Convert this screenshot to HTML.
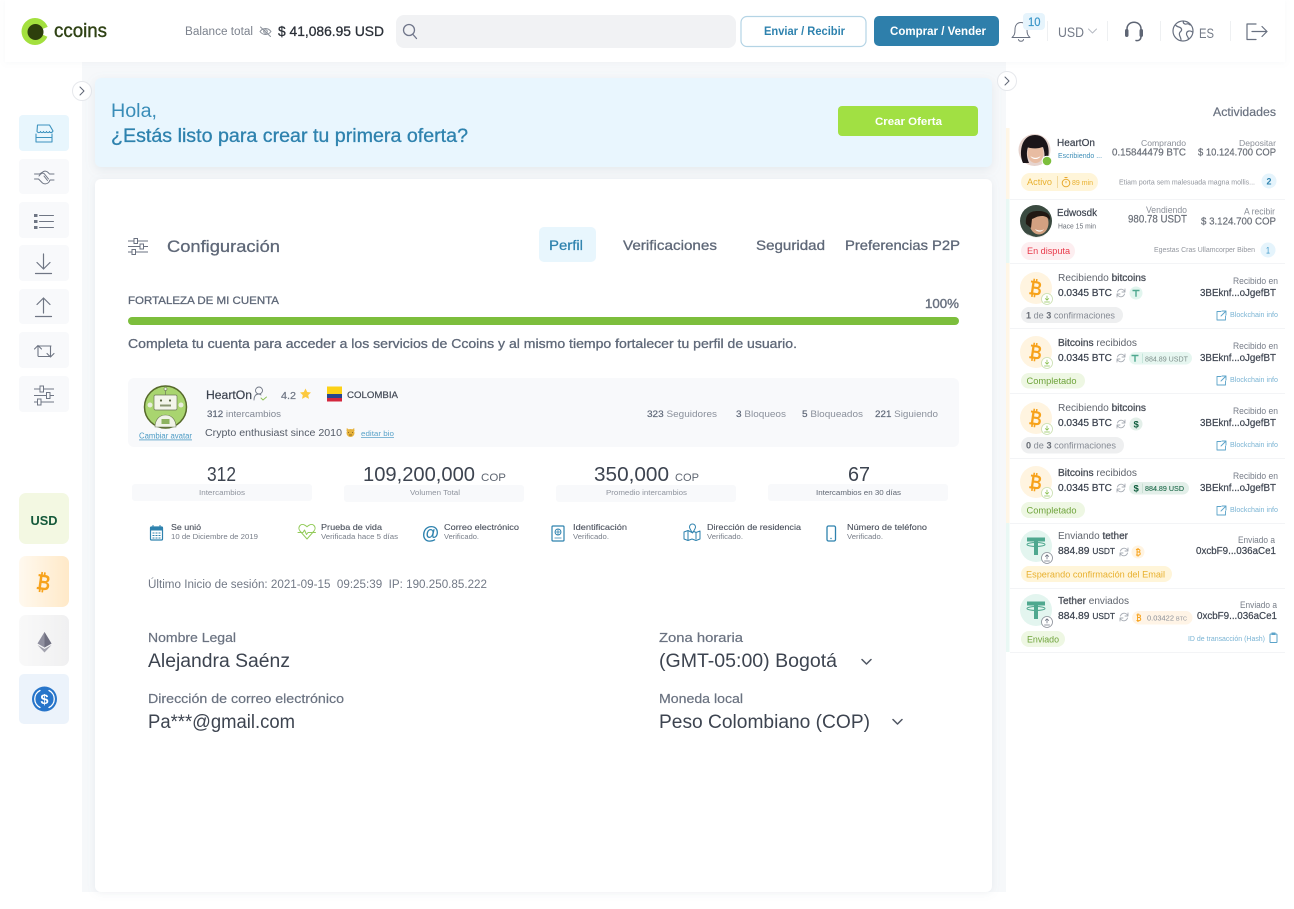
<!DOCTYPE html>
<html lang="es"><head><meta charset="utf-8"><title>Ccoins</title>
<style>
html,body{margin:0;padding:0;background:#fff;width:1294px;height:909px;overflow:hidden}
svg{display:block;position:absolute;left:0;top:0}
text{font-family:"Liberation Sans",sans-serif;white-space:pre}
.b{font-weight:700}
.st{fill:none;stroke-linecap:round;stroke-linejoin:round}
</style></head><body>
<svg width="1294" height="909" viewBox="0 0 1294 909" xmlns="http://www.w3.org/2000/svg">
<defs>
<filter id="s1" x="-5%" y="-20%" width="110%" height="150%"><feDropShadow dx="0" dy="3" stdDeviation="5" flood-color="#8a99a8" flood-opacity=".16"/></filter>
<filter id="s2" x="-5%" y="-5%" width="110%" height="110%"><feDropShadow dx="0" dy="1" stdDeviation="4" flood-color="#8a99a8" flood-opacity=".14"/></filter>
<filter id="s3" x="-2%" y="-20%" width="104%" height="150%"><feDropShadow dx="0" dy="1" stdDeviation="3" flood-color="#8a99a8" flood-opacity=".07"/></filter>
<linearGradient id="gb" x1="0" x2="1"><stop offset="0" stop-color="#fff9ef"/><stop offset="1" stop-color="#ffe9c8"/></linearGradient>
<linearGradient id="ge" x1="0" x2="1"><stop offset="0" stop-color="#f9f9f9"/><stop offset="1" stop-color="#f0f0f1"/></linearGradient>
<path id="rf" class="st" stroke="#a6abb3" stroke-width=".9" d="M-3.500-1a3.800 3.800 0 0 1 6.500-1.500l1 1M3.500 1a3.800 3.800 0 0 1-6.500 1.500l-1-1M4-4v3h-3M-4 4v-3h3"/>
<path id="ex" class="st" stroke="#5ba3c9" stroke-width=".9" d="M4-.5H0v8.500h8.500v-4M5-1h4v4M9-1L4 4"/>
<g id="dl"><circle r="5.500" fill="#fff" stroke="#c9dfae" stroke-width=".8"/><path class="st" stroke="#8cc152" stroke-width=".8" d="M0-3v4M-1.700-.5L0 1.200 1.700-.5M-2.500 3h5"/></g>
<g id="ul"><circle r="5.500" fill="#fff" stroke="#8a8f98" stroke-width=".8"/><path class="st" stroke="#6f7684" stroke-width=".8" d="M0 1v-4M-1.700-1.500L0-3.200 1.700-1.500M-2.500 3h5"/></g>
<g id="te"><circle r="16" fill="#e3f5ef"/><rect x="-9" y="-8.500" width="18" height="4" fill="#4fa88f"/><rect x="-2" y="-8" width="4" height="17" fill="#4fa88f"/><ellipse cy="-1.500" rx="9" ry="2" fill="none" stroke="#4fa88f"/></g>
</defs>

<!-- main background -->
<rect x="82" y="60" width="924" height="832" fill="#f6f8fa"/>
<rect x="1006" y="60" width="279" height="832" fill="#fff"/>

<!-- header -->
<rect x="5" y="0" width="1280" height="62" fill="#fff" filter="url(#s3)"/>
<circle cx="35" cy="31.500" r="13.500" fill="#a3e03e"/>
<path d="M36 31.500L50 26V38Z" fill="#fff"/>
<circle cx="35.500" cy="32" r="8" fill="#2d3f0c"/>
<text x="54" y="37" font-size="19" textLength="53" lengthAdjust="spacingAndGlyphs" fill="#2f4214" stroke="#2f4214" stroke-width=".4">ccoins</text>
<text x="185" y="35" font-size="11.500" textLength="68" lengthAdjust="spacingAndGlyphs" fill="#7c828d">Balance total</text>
<g class="st" stroke="#8a909a" stroke-width="1"><path d="M260 31.500c3-4 8-4 11 0c-3 4-8 4-11 0z"/><circle cx="265.500" cy="31.500" r="1.800"/><path d="M260.500 27l10 9.500"/></g>
<text x="278" y="36" font-size="14" textLength="106" lengthAdjust="spacingAndGlyphs" fill="#2b3038" stroke="#2b3038" stroke-width=".3">$ 41,086.95 USD</text>
<rect x="396" y="15" width="340" height="33" rx="8" fill="#f1f2f4"/>
<g class="st" stroke="#70768a" stroke-width="1.300"><circle cx="409" cy="30" r="5.500"/><path d="M413 34.500l3.500 4"/></g>
<rect x="741" y="16.500" width="125" height="30" rx="6" fill="#fff" stroke="#b4d4e5" stroke-width="1.200"/>
<text x="764" y="35" font-size="11.500" class="b" textLength="81" lengthAdjust="spacingAndGlyphs" fill="#2e82ae">Enviar / Recibir</text>
<rect x="874" y="16" width="125" height="30" rx="5" fill="#2e7fab"/>
<text x="890" y="35" font-size="11.500" class="b" textLength="96" lengthAdjust="spacingAndGlyphs" fill="#fff">Comprar / Vender</text>
<g class="st" stroke="#6a7180" stroke-width="1"><path d="M1012 37.500c2.500-2 3-4 3-8c0-4 2-7 6-7c4 0 6 3 6 7c0 4 .5 6 3 8z"/><path d="M1018.500 39.500c.5 2.300 4.500 2.300 5 0"/></g>
<rect x="1023" y="13" width="22" height="17" rx="4" fill="#e6f4fc"/>
<text x="1028" y="26" font-size="11.500" textLength="12.500" lengthAdjust="spacingAndGlyphs" fill="#3a96c8" stroke="#3a96c8" stroke-width=".2">10</text>
<g stroke="#eef0f2"><path d="M1047.500 21v20M1107.500 21v20M1160.500 21v20M1230.500 21v20"/></g>
<text x="1058" y="37" font-size="14" textLength="26" lengthAdjust="spacingAndGlyphs" fill="#747b88">USD</text>
<path class="st" stroke="#b5bac2" stroke-width="1" d="M1088.500 29l4 4 4-4"/>
<g class="st" stroke="#5e6574" stroke-width="1.500"><path d="M1127 34v-5c0-9 14-9 14 0v5"/><path d="M1136 40.500c3 .5 5-1 5-4"/></g>
<rect x="1125" y="29" width="3.500" height="8" rx="1.700" fill="#5e6574"/><rect x="1139.500" y="29" width="3.500" height="8" rx="1.700" fill="#5e6574"/>
<g class="st" stroke="#687080" stroke-width="1.200"><circle cx="1183" cy="31" r="10"/><path d="M1175.500 25c2 3 5 1 6 4c1 3-3 2-2 6c.5 2 1.500 3 1.500 5"/><path d="M1183.500 21.500c-1 2 2 3 3 2.500c2-1 3 1 4 1M1192.500 32c-3-2-6-1-6 2c0 2 1.500 2 2 5"/></g>
<text x="1199" y="38" font-size="14" textLength="15" lengthAdjust="spacingAndGlyphs" fill="#747b88">ES</text>
<g class="st" stroke="#687080" stroke-width="1.200"><path d="M1256 24h-9v15.500h9"/><path d="M1252 31.500h15M1262 26.500l5 5-5 5"/></g>

<!-- chevrons -->
<circle cx="82" cy="91" r="9.500" fill="#fff" stroke="#e6e8ec"/>
<path class="st" stroke="#5e6574" stroke-width="1" d="M80 87l4 4-4 4"/>
<circle cx="1007" cy="81" r="9.500" fill="#fff" stroke="#e6e8ec"/>
<path class="st" stroke="#5e6574" stroke-width="1" d="M1005 77l4 4-4 4"/>

<!-- sidebar -->
<rect x="19" y="115" width="50" height="36" rx="4" fill="#e8f6fd"/>
<g fill="#f8f9fb"><rect x="19" y="159" width="50" height="35" rx="4"/><rect x="19" y="202" width="50" height="36" rx="4"/><rect x="19" y="245" width="50" height="36" rx="4"/><rect x="19" y="289" width="50" height="35" rx="4"/><rect x="19" y="332" width="50" height="36" rx="4"/><rect x="19" y="376" width="50" height="36" rx="4"/></g>
<g class="st" stroke="#3d93bf" stroke-width="1.100"><path d="M38 125h12l3.500 6c-1 2-3 2-3.500.5c-.5 1.500-2.500 1.500-3 0c-.5 1.500-2.500 1.500-3 0c-.5 1.500-2.500 1.500-3 0c-.5 1.500-2.500 1.500-3.500 0z" transform="translate(-.5 0)"/><path d="M36 134v8h16v-8M36 137.500h16"/></g>
<g class="st" stroke="#6f7684" stroke-width="1"><path d="M34.500 174h5l4-2.500c2-1 4 0 6 2.500h4.500M34.500 179h4l4 4c2 1.500 5 1 6.500-1l1-2h4M39 176c2-3 4-3.500 5.500-2l4 5M44 176l3.500 4.500"/></g>
<g fill="#6f7684"><rect x="34" y="214" width="3.500" height="3"/><rect x="34" y="220" width="3.500" height="3"/><rect x="34" y="226" width="3.500" height="3"/></g>
<g class="st" stroke="#6f7684" stroke-width="1"><path d="M39.500 215.500h14M39.500 221.500h14M39.500 227.500h14"/></g>
<g class="st" stroke="#6f7684" stroke-width="1.200"><path d="M43.500 254v15M37 262.500l6.500 6.500 6.500-6.500M35.500 273.500h16"/><path d="M43.500 298v15M37 304.500l6.500-6.500 6.500 6.500M35.500 316.500h16"/></g>
<g class="st" stroke="#6f7684" stroke-width="1.100"><path d="M38 356v-10h13M34.500 349l3.500-3.500 3.500 3.500M50.500 346v10.500h-12M47 353.500l3.500 3.500 3.500-3.500"/></g>
<g stroke="#6f7684" stroke-width="1" fill="#f8f9fb"><path d="M34 389h20M34 395.500h20M34 402h20"/><rect x="40" y="386" width="3.500" height="6"/><rect x="46.500" y="392.500" width="3.500" height="6"/><rect x="37.500" y="399" width="3.500" height="6"/></g>

<rect x="19" y="493" width="50" height="51" rx="7" fill="#f3f8e2"/>
<text x="30.500" y="525" font-size="12.500" class="b" textLength="27" lengthAdjust="spacingAndGlyphs" fill="#14593a">USD</text>
<rect x="19" y="556" width="50" height="51" rx="7" fill="url(#gb)"/>
<text x="36.500" y="590" font-size="22" class="b" fill="#f7a21b" transform="rotate(8 44 582)" textLength="14" lengthAdjust="spacingAndGlyphs">₿</text>
<rect x="19" y="615" width="50" height="51" rx="7" fill="url(#ge)"/>
<path d="M44.500 632l-7 11.500 7 4 7-4z" fill="#8f8f9e"/><path d="M44.500 632v15.500l7-4z" fill="#6f6f80"/><path d="M37.500 645l7 4 7-4-7 7.500z" fill="#a3a3ae"/>
<rect x="19" y="674" width="50" height="50" rx="5" fill="#ecf3fb"/>
<circle cx="44.500" cy="699" r="12.500" fill="#2775ca"/>
<path class="st" stroke="#fff" stroke-width="1.300" d="M40 690.500a9.500 9.500 0 0 0 0 17M49 690.500a9.500 9.500 0 0 1 0 17"/>
<text x="40.500" y="704" font-size="14" class="b" textLength="8" lengthAdjust="spacingAndGlyphs" fill="#fff">$</text>

<!-- banner -->
<rect x="95" y="78" width="897" height="89" rx="6" fill="#e9f6fe" filter="url(#s1)"/>
<text x="111" y="117" font-size="19" textLength="46" lengthAdjust="spacingAndGlyphs" fill="#3a8db8">Hola,</text>
<text x="111" y="142" font-size="19" textLength="357" lengthAdjust="spacingAndGlyphs" fill="#2e82ae" stroke="#2e82ae" stroke-width=".3">¿Estás listo para crear tu primera oferta?</text>
<rect x="838" y="106" width="140" height="30" rx="4" fill="#a1e043"/>
<text x="875" y="125" font-size="11" class="b" textLength="67" lengthAdjust="spacingAndGlyphs" fill="#fff">Crear Oferta</text>

<!-- card -->
<rect x="95" y="179" width="897" height="713" rx="6" fill="#fff" filter="url(#s2)"/>
<g stroke="#6a7180" stroke-width="1" fill="#fff"><path d="M128 241h20M128 246.500h20M128 252h20"/><rect x="134" y="238.500" width="3.500" height="5"/><rect x="140" y="244" width="3.500" height="5"/><rect x="132" y="249.500" width="3.500" height="5"/></g>
<text x="167" y="252" font-size="17" textLength="113" lengthAdjust="spacingAndGlyphs" fill="#5f6878" stroke="#5f6878" stroke-width=".3">Configuración</text>
<rect x="539" y="227" width="57" height="35" rx="5" fill="#e8f6fd"/>
<text x="549" y="250" font-size="14" textLength="34" lengthAdjust="spacingAndGlyphs" fill="#2e82ae" stroke="#2e82ae" stroke-width=".25">Perfil</text>
<g font-size="14" fill="#5f6878" stroke="#5f6878" stroke-width=".3">
<text x="623" y="250" textLength="94" lengthAdjust="spacingAndGlyphs">Verificaciones</text>
<text x="756" y="250" textLength="69" lengthAdjust="spacingAndGlyphs">Seguridad</text>
<text x="845" y="250" textLength="115" lengthAdjust="spacingAndGlyphs">Preferencias P2P</text>
</g>
<text x="128" y="304" font-size="11" textLength="151" lengthAdjust="spacingAndGlyphs" fill="#5f6878" stroke="#5f6878" stroke-width=".3">FORTALEZA DE MI CUENTA</text>
<text x="925" y="308" font-size="13" textLength="34" lengthAdjust="spacingAndGlyphs" fill="#6a7280" stroke="#6a7280" stroke-width=".4">100%</text>
<rect x="128" y="317" width="831" height="8" rx="4" fill="#7cbe3c"/>
<text x="128" y="348" font-size="13" textLength="669" lengthAdjust="spacingAndGlyphs" fill="#5f6878" stroke="#5f6878" stroke-width=".3">Completa tu cuenta para acceder a los servicios de Ccoins y al mismo tiempo fortalecer tu perfil de usuario.</text>

<!-- profile box -->
<rect x="128" y="378" width="831" height="69" rx="6" fill="#f8f9fb"/>
<circle cx="165.500" cy="407" r="21" fill="#a9d56f" stroke="#56692a" stroke-width="1.500"/>
<rect x="154" y="395" width="23" height="15" rx="1.500" fill="#f3f5ea" stroke="#6d7a58" stroke-width=".7"/>
<path d="M165.500 395v-5" stroke="#6d7a58" stroke-width=".7"/><circle cx="165.500" cy="389" r="1.500" fill="#eef2e2" stroke="#6d7a58" stroke-width=".6"/>
<circle cx="161" cy="400.500" r="1.100" fill="#55633d"/><circle cx="170" cy="400.500" r="1.100" fill="#55633d"/><rect x="160" y="404.500" width="11" height="2" fill="#8a9670"/>
<circle cx="150" cy="405" r="2.500" fill="#e8eddc"/><circle cx="181" cy="405" r="2.500" fill="#e8eddc"/>
<path d="M155 427c0-8 5-12 10.500-12s10.500 4 10.500 12z" fill="#f0f3e6" stroke="#6d7a58" stroke-width=".6"/><rect x="161.500" y="419" width="8" height="5" fill="#8db35f"/>
<text x="139" y="438.500" font-size="8" textLength="53" lengthAdjust="spacingAndGlyphs" fill="#4b9ac4" text-decoration="underline">Cambiar avatar</text>
<text x="206" y="399" font-size="11.500" textLength="46" lengthAdjust="spacingAndGlyphs" fill="#3d4450" stroke="#3d4450" stroke-width=".2">HeartOn</text>
<g class="st" stroke="#6f7684" stroke-width=".9"><circle cx="259" cy="390.500" r="3.500"/><path d="M254 400c0-4 2-6 4.500-6c1 0 2 .3 2.500 1"/></g><path class="st" stroke="#8cc152" stroke-width=".9" d="M261 398l2 2 3.500-3"/>
<text x="281" y="399" font-size="10.500" textLength="15" lengthAdjust="spacingAndGlyphs" fill="#727987" stroke="#727987" stroke-width=".25">4.2</text>
<path d="M305.500 388.500l1.700 3.500 3.800.5-2.800 2.600.8 3.800-3.500-1.900-3.500 1.900.8-3.800-2.800-2.600 3.800-.5z" fill="#fcc93f"/>
<rect x="327" y="386.500" width="15" height="7.500" fill="#fcd116"/><rect x="327" y="394" width="15" height="4" fill="#27468f"/><rect x="327" y="398" width="15" height="3.500" fill="#d3273d"/>
<text x="347" y="398" font-size="9.500" textLength="51" lengthAdjust="spacingAndGlyphs" fill="#444b57" stroke="#444b57" stroke-width=".2">COLOMBIA</text>
<text x="207" y="417" font-size="9.500" textLength="74" lengthAdjust="spacingAndGlyphs" fill="#828894"><tspan fill="#5f6878" stroke="#5f6878" stroke-width=".2">312</tspan> intercambios</text>
<text x="205" y="436" font-size="10" textLength="137" lengthAdjust="spacingAndGlyphs" fill="#555c68">Crypto enthusiast since 2010</text>
<circle cx="350.500" cy="433" r="4" fill="#e6b33e"/><path d="M346.500 431l.3-3 2 1.500h3.400l2-1.500.3 3z" fill="#e6b33e"/><path d="M348 432.500h1M352 432.500h1M349 435h3" stroke="#7a5518" stroke-width=".7"/>
<text x="361" y="436" font-size="7.500" textLength="33" lengthAdjust="spacingAndGlyphs" fill="#5ba3c9" text-decoration="underline">editar bio</text>
<g font-size="9.500" fill="#8a909b">
<text x="647" y="417" textLength="70" lengthAdjust="spacingAndGlyphs"><tspan fill="#5f6878" stroke="#5f6878" stroke-width=".2">323</tspan> Seguidores</text>
<text x="736" y="417" textLength="50" lengthAdjust="spacingAndGlyphs"><tspan fill="#5f6878" stroke="#5f6878" stroke-width=".2">3</tspan> Bloqueos</text>
<text x="802" y="417" textLength="61" lengthAdjust="spacingAndGlyphs"><tspan fill="#5f6878" stroke="#5f6878" stroke-width=".2">5</tspan> Bloqueados</text>
<text x="875" y="417" textLength="63" lengthAdjust="spacingAndGlyphs"><tspan fill="#5f6878" stroke="#5f6878" stroke-width=".2">221</tspan> Siguiendo</text>
</g>

<!-- stats -->
<g fill="#f8f9fb"><rect x="132" y="484" width="180" height="17" rx="3"/><rect x="344" y="485" width="180" height="17" rx="3"/><rect x="556" y="485" width="180" height="17" rx="3"/><rect x="768" y="484" width="180" height="17" rx="3"/></g>
<g font-size="20" fill="#3d4450">
<text x="207" y="481" textLength="29" lengthAdjust="spacingAndGlyphs">312</text>
<text x="363" y="481" textLength="112" lengthAdjust="spacingAndGlyphs">109,200,000</text>
<text x="594" y="481" textLength="75" lengthAdjust="spacingAndGlyphs">350,000</text>
<text x="848" y="481" textLength="22" lengthAdjust="spacingAndGlyphs">67</text>
</g>
<g font-size="11" fill="#5f6672"><text x="481" y="481" textLength="25" lengthAdjust="spacingAndGlyphs">COP</text><text x="675" y="481" textLength="24" lengthAdjust="spacingAndGlyphs">COP</text></g>
<g font-size="7.500" fill="#8f949e">
<text x="199" y="495" textLength="46" lengthAdjust="spacingAndGlyphs">Intercambios</text>
<text x="410" y="495" textLength="50" lengthAdjust="spacingAndGlyphs">Volumen Total</text>
<text x="606" y="495" textLength="81" lengthAdjust="spacingAndGlyphs">Promedio intercambios</text>
<text x="816" y="495" textLength="85" lengthAdjust="spacingAndGlyphs" fill="#5f6672">Intercambios en 30 días</text>
</g>

<!-- verification row -->
<g font-size="8" fill="#4a505c" stroke="#4a505c" stroke-width=".1">
<text x="171" y="530" textLength="30" lengthAdjust="spacingAndGlyphs">Se unió</text>
<text x="321" y="530" textLength="61" lengthAdjust="spacingAndGlyphs">Prueba de vida</text>
<text x="444" y="530" textLength="75" lengthAdjust="spacingAndGlyphs">Correo electrónico</text>
<text x="573" y="530" textLength="54" lengthAdjust="spacingAndGlyphs">Identificación</text>
<text x="707" y="530" textLength="94" lengthAdjust="spacingAndGlyphs">Dirección de residencia</text>
<text x="847" y="530" textLength="80" lengthAdjust="spacingAndGlyphs">Número de teléfono</text>
</g>
<g font-size="7.500" fill="#777d88">
<text x="171" y="539" textLength="87" lengthAdjust="spacingAndGlyphs">10 de Diciembre de 2019</text>
<text x="321" y="539" textLength="77" lengthAdjust="spacingAndGlyphs">Verificada hace 5 días</text>
<text x="444" y="539" textLength="35" lengthAdjust="spacingAndGlyphs">Verificado.</text>
<text x="573" y="539" textLength="36" lengthAdjust="spacingAndGlyphs">Verificado.</text>
<text x="707" y="539" textLength="36" lengthAdjust="spacingAndGlyphs">Verificado.</text>
<text x="847" y="539" textLength="36" lengthAdjust="spacingAndGlyphs">Verificado.</text>
</g>
<rect x="150.500" y="527" width="12" height="13" rx="1" fill="none" stroke="#2e82ae" stroke-width="1.200"/><rect x="150" y="527" width="13" height="3.500" fill="#2e82ae"/>
<path d="M153 525v3M160 525v3" stroke="#2e82ae"/>
<path d="M152.500 533h8M152.500 535.500h8M152.500 538h8" stroke="#2e82ae" stroke-dasharray="2 1"/>
<path class="st" stroke="#93cb5a" stroke-width="1" d="M300 531c-3-4 1-8 4.500-6c1.500.8 2.500 1.800 2.500 1.800s1-1 2.500-1.800c3.500-2 7.500 2 4.500 6l-7 8zM298 532.500h5l1.500-2.500 2 4.500 1.500-2h7.500"/>
<text x="422" y="539" font-size="18" class="b" textLength="17" lengthAdjust="spacingAndGlyphs" fill="#2e82ae">@</text>
<rect x="552" y="526" width="12" height="15" rx="1" fill="none" stroke="#2e82ae" stroke-width="1.200"/><circle cx="558" cy="532" r="3" fill="none" stroke="#2e82ae" stroke-width=".9"/><path d="M555 532h6M558 529v6M554.500 538h7" stroke="#2e82ae" stroke-width=".8"/>
<g class="st" stroke="#2e82ae" stroke-width="1"><path d="M684 532l4-1.500 4 2 2-1 2 1 4-1.500v8l-4 1.500-4-1.500-4 1.500-4-1.500z"/><path d="M692.500 533c-2-3-3-4.500-3-6a3 3 0 0 1 6 0c0 1.500-1 3-3 6z"/><path d="M688 531v9M696 533v6"/></g>
<rect x="827" y="526" width="8.500" height="15" rx="1.500" fill="none" stroke="#2e82ae" stroke-width="1.300"/><circle cx="831" cy="538.500" r=".7" fill="#2e82ae"/>

<text x="148" y="588" font-size="11.500" textLength="339" lengthAdjust="spacingAndGlyphs" fill="#727986">Último Inicio de sesión: 2021-09-15  09:25:39  IP: 190.250.85.222</text>

<!-- fields -->
<g font-size="13" fill="#6a7280" stroke="#6a7280" stroke-width=".2">
<text x="148" y="642" textLength="88" lengthAdjust="spacingAndGlyphs">Nombre Legal</text>
<text x="148" y="703" textLength="196" lengthAdjust="spacingAndGlyphs">Dirección de correo electrónico</text>
<text x="659" y="642" textLength="84" lengthAdjust="spacingAndGlyphs">Zona horaria</text>
<text x="659" y="703" textLength="84" lengthAdjust="spacingAndGlyphs">Moneda local</text>
</g>
<g font-size="19" fill="#3d4450">
<text x="148" y="667" textLength="142" lengthAdjust="spacingAndGlyphs">Alejandra Saénz</text>
<text x="148" y="728" textLength="147" lengthAdjust="spacingAndGlyphs">Pa***@gmail.com</text>
<text x="659" y="667" textLength="178" lengthAdjust="spacingAndGlyphs">(GMT-05:00) Bogotá</text>
<text x="659" y="728" textLength="211" lengthAdjust="spacingAndGlyphs">Peso Colombiano (COP)</text>
</g>
<g class="st" stroke="#4f5663" stroke-width="1.500"><path d="M862 659.500l4.500 4.500 4.500-4.500M893 719.500l4.500 4.500 4.500-4.500"/></g>

<!-- right panel -->
<text x="1213" y="116" font-size="11.500" textLength="63" lengthAdjust="spacingAndGlyphs" fill="#6a7280" stroke="#6a7280" stroke-width=".2">Actividades</text>
<rect x="1006" y="128" width="3.500" height="71" fill="#fff6e6"/>
<rect x="1006" y="199" width="3.500" height="64" fill="#e9f8f4"/>
<rect x="1006" y="263" width="3.500" height="260" fill="#fff6e6"/>
<rect x="1006" y="523" width="3.500" height="129" fill="#e9f8f4"/>
<g stroke="#f3f4f6"><path d="M1010 199.500h275M1010 263.500h275M1010 328.500h275M1010 393.500h275M1010 458.500h275M1010 523.500h275M1010 588.500h275M1010 652.500h275"/></g>

<!-- row 1 -->
<circle cx="1034.500" cy="150" r="16" fill="#e6d3cd"/>
<path d="M1023 163c-4-8-3-28 12-28s16 20 11 28l-3 0c2-5 2-10 0-16c-4 2-11 2-15 0c-2 6-1 11 1 16z" fill="#1b1519"/>
<ellipse cx="1035.500" cy="153" rx="8" ry="10" fill="#e8bca2"/>
<path d="M1027 147c4 2 13 2 17-1l-1-6h-14z" fill="#1b1519"/>
<path d="M1030.500 156c3 2.500 7 2.500 10 0c-1.500 4-8.500 4-10 0z" fill="#fff"/>
<circle cx="1047" cy="161" r="4.800" fill="#7cbe3c" stroke="#fff"/>
<text x="1057" y="146" font-size="10" textLength="38" lengthAdjust="spacingAndGlyphs" fill="#3d4450" stroke="#3d4450" stroke-width=".2">HeartOn</text>
<text x="1058" y="158" font-size="7" textLength="44" lengthAdjust="spacingAndGlyphs" fill="#3f8fb8">Escribiendo ...</text>
<text x="1141" y="146" font-size="8.500" textLength="45" lengthAdjust="spacingAndGlyphs" fill="#8a8f98">Comprando</text>
<text x="1112" y="155.500" font-size="10" textLength="74" lengthAdjust="spacingAndGlyphs" fill="#6a6f78" stroke="#6a6f78" stroke-width=".2">0.15844479 BTC</text>
<text x="1239" y="146" font-size="8.500" textLength="37" lengthAdjust="spacingAndGlyphs" fill="#8a8f98">Depositar</text>
<text x="1198" y="155.500" font-size="10" textLength="78" lengthAdjust="spacingAndGlyphs" fill="#6a6f78" stroke="#6a6f78" stroke-width=".2">$ 10.124.700 COP</text>
<rect x="1021" y="173" width="77" height="18" rx="9" fill="#fff5d9"/>
<text x="1027" y="185" font-size="9" textLength="25" lengthAdjust="spacingAndGlyphs" fill="#e8b02e">Activo</text>
<path d="M1057.500 176v12" stroke="#f0d28c" stroke-width=".8"/>
<circle cx="1066" cy="183" r="3.800" fill="none" stroke="#e8a92e" stroke-width="1"/><path d="M1064.500 177.500h3M1066 181v2.200" stroke="#e8a92e" stroke-width=".9"/>
<text x="1072" y="185" font-size="7.500" textLength="21" lengthAdjust="spacingAndGlyphs" fill="#e8b02e">89 min</text>
<text x="1119" y="184.500" font-size="7" textLength="136" lengthAdjust="spacingAndGlyphs" fill="#92969e">Etiam porta sem malesuada magna mollis...</text>
<circle cx="1269" cy="181" r="7.500" fill="#e5f4fc"/>
<text x="1266.500" y="184.500" font-size="9.500" class="b" textLength="5" lengthAdjust="spacingAndGlyphs" fill="#2e82ae">2</text>

<!-- row 2 -->
<circle cx="1036" cy="221" r="16" fill="#3a4a40"/>
<ellipse cx="1039" cy="223" rx="9.500" ry="11.500" fill="#d3a181"/>
<path d="M1026 224c-1-9 3-13 12-13s13 4 12 9c-3-3-5-4-8-4c-5 0-7 2-10 3l-1 9z" fill="#211812"/>
<path d="M1035 229c3 2 7 2 9 0c-2 3.500-7 3.500-9 0z" fill="#fff"/>
<path d="M1026 233c3 2 8 4 10 4c4 0 7-1 9-3l-1 2c-2 1-5 1.500-8 1.500c-4 0-7-2-10-4.500z" fill="#e8e4de"/>
<text x="1057" y="216" font-size="10" textLength="40" lengthAdjust="spacingAndGlyphs" fill="#3d4450" stroke="#3d4450" stroke-width=".2">Edwosdk</text>
<text x="1058" y="228.500" font-size="7" textLength="38" lengthAdjust="spacingAndGlyphs" fill="#6a6f78">Hace 15 min</text>
<text x="1146" y="213" font-size="9" textLength="41" lengthAdjust="spacingAndGlyphs" fill="#8a8f98">Vendiendo</text>
<text x="1128" y="222.500" font-size="11" textLength="59" lengthAdjust="spacingAndGlyphs" fill="#6a6f78" stroke="#6a6f78" stroke-width=".2">980.78 USDT</text>
<text x="1244" y="214.500" font-size="9" textLength="31" lengthAdjust="spacingAndGlyphs" fill="#8a8f98">A recibir</text>
<text x="1201" y="224.500" font-size="10" textLength="75" lengthAdjust="spacingAndGlyphs" fill="#6a6f78" stroke="#6a6f78" stroke-width=".2">$ 3.124.700 COP</text>
<rect x="1021" y="242" width="54" height="18" rx="9" fill="#fdeef0"/>
<text x="1027" y="254" font-size="9" textLength="43" lengthAdjust="spacingAndGlyphs" fill="#e8394a">En disputa</text>
<text x="1154" y="252" font-size="7" textLength="101" lengthAdjust="spacingAndGlyphs" fill="#92969e">Egestas Cras Ullamcorper Biben</text>
<circle cx="1268" cy="250" r="7.500" fill="#e5f4fc"/>
<text x="1266" y="253.500" font-size="9.500" textLength="4" lengthAdjust="spacingAndGlyphs" fill="#3a96c8">1</text>

<!-- BTC circles -->
<g fill="#fff4e0"><circle cx="1036" cy="288" r="16"/><circle cx="1036" cy="352" r="16"/><circle cx="1036" cy="418" r="16"/><circle cx="1036" cy="482" r="16"/></g>
<g font-size="20" class="b" fill="#f7a21b">
<text x="1029" y="295" transform="rotate(8 1036 288)" textLength="13" lengthAdjust="spacingAndGlyphs">₿</text>
<text x="1029" y="359" transform="rotate(8 1036 352)" textLength="13" lengthAdjust="spacingAndGlyphs">₿</text>
<text x="1029" y="425" transform="rotate(8 1036 418)" textLength="13" lengthAdjust="spacingAndGlyphs">₿</text>
<text x="1029" y="489" transform="rotate(8 1036 482)" textLength="13" lengthAdjust="spacingAndGlyphs">₿</text>
</g>
<use href="#dl" x="1047" y="299"/><use href="#dl" x="1047" y="363"/><use href="#dl" x="1047" y="429"/><use href="#dl" x="1047" y="493"/>

<!-- tether circles -->
<use href="#te" x="1036" y="546"/><use href="#te" x="1036" y="610"/>
<use href="#ul" x="1047" y="558"/><use href="#ul" x="1047" y="622"/>

<!-- titles -->
<g font-size="10" fill="#5f646d">
<text x="1058" y="281" textLength="88" lengthAdjust="spacingAndGlyphs">Recibiendo <tspan fill="#4a4f58" stroke="#4a4f58" stroke-width=".3">bitcoins</tspan></text>
<text x="1058" y="346" textLength="79" lengthAdjust="spacingAndGlyphs"><tspan fill="#4a4f58" stroke="#4a4f58" stroke-width=".3">Bitcoins</tspan> recibidos</text>
<text x="1058" y="411" textLength="88" lengthAdjust="spacingAndGlyphs">Recibiendo <tspan fill="#4a4f58" stroke="#4a4f58" stroke-width=".3">bitcoins</tspan></text>
<text x="1058" y="476" textLength="79" lengthAdjust="spacingAndGlyphs"><tspan fill="#4a4f58" stroke="#4a4f58" stroke-width=".3">Bitcoins</tspan> recibidos</text>
<text x="1058" y="539" textLength="70" lengthAdjust="spacingAndGlyphs">Enviando <tspan fill="#4a4f58" stroke="#4a4f58" stroke-width=".3">tether</tspan></text>
<text x="1058" y="604" textLength="71" lengthAdjust="spacingAndGlyphs"><tspan fill="#4a4f58" stroke="#4a4f58" stroke-width=".3">Tether</tspan> enviados</text>
</g>
<g font-size="10.500" fill="#3d4450" stroke="#3d4450" stroke-width=".25">
<text x="1058" y="296" textLength="54" lengthAdjust="spacingAndGlyphs">0.0345 BTC</text>
<text x="1058" y="361" textLength="54" lengthAdjust="spacingAndGlyphs">0.0345 BTC</text>
<text x="1058" y="426" textLength="54" lengthAdjust="spacingAndGlyphs">0.0345 BTC</text>
<text x="1058" y="491" textLength="54" lengthAdjust="spacingAndGlyphs">0.0345 BTC</text>
<text x="1058" y="554" textLength="57" lengthAdjust="spacingAndGlyphs">884.89 <tspan font-size="8.500">USDT</tspan></text>
<text x="1058" y="619" textLength="57" lengthAdjust="spacingAndGlyphs">884.89 <tspan font-size="8.500">USDT</tspan></text>
</g>
<use href="#rf" x="1121" y="293"/><use href="#rf" x="1121" y="358"/><use href="#rf" x="1121" y="424"/><use href="#rf" x="1121" y="488"/><use href="#rf" x="1124" y="552"/><use href="#rf" x="1124" y="617"/>

<circle cx="1136" cy="293" r="6.500" fill="#e1f5ee"/>
<path d="M1132.500 289.800h7v1.400h-2.800v5.500h-1.400v-5.500h-2.800z" fill="#4fa88f"/>
<rect x="1129" y="352" width="63" height="12.500" rx="6.200" fill="#e6f6f0"/>
<path d="M1131.500 354.800h7v1.400h-2.800v5.500h-1.400v-5.500h-2.800z" fill="#4fa88f"/>
<path d="M1142.500 353.500v9.500" stroke="#bfe3d6" stroke-width=".8"/>
<text x="1145" y="361.500" font-size="7" textLength="43" lengthAdjust="spacingAndGlyphs" fill="#7d8e8a">884.89 USDT</text>
<circle cx="1136" cy="424" r="6.500" fill="#e3efe9"/>
<text x="1133.500" y="427.500" font-size="9.500" class="b" textLength="5.300" lengthAdjust="spacingAndGlyphs" fill="#0e5c3c">$</text>
<rect x="1129" y="482" width="60" height="12.500" rx="6.200" fill="#e3efe9"/>
<text x="1133.500" y="491.500" font-size="9.500" class="b" textLength="5.300" lengthAdjust="spacingAndGlyphs" fill="#0e5c3c">$</text>
<path d="M1142.500 483.500v9.500" stroke="#c3dccf" stroke-width=".8"/>
<text x="1145" y="491" font-size="7" textLength="39" lengthAdjust="spacingAndGlyphs" fill="#1d6a4a" stroke="#1d6a4a" stroke-width=".1">884.89 USD</text>
<circle cx="1138" cy="552" r="6.500" fill="#fff4e2"/>
<text x="1135.500" y="555.500" font-size="9.500" class="b" textLength="5.500" lengthAdjust="spacingAndGlyphs" fill="#f7a21b">₿</text>
<rect x="1132" y="611" width="60.500" height="13.500" rx="6.700" fill="#fff4e6"/>
<text x="1136" y="621" font-size="9.500" class="b" textLength="5.500" lengthAdjust="spacingAndGlyphs" fill="#f7a21b">₿</text>
<text x="1147" y="620.500" font-size="7" textLength="27" lengthAdjust="spacingAndGlyphs" fill="#8a8f98">0.03422</text>
<text x="1176" y="620.500" font-size="5" textLength="11" lengthAdjust="spacingAndGlyphs" fill="#8a8f98">BTC</text>

<g font-size="9" fill="#777d88">
<text x="1233" y="284" textLength="45" lengthAdjust="spacingAndGlyphs">Recibido en</text>
<text x="1233" y="349" textLength="45" lengthAdjust="spacingAndGlyphs">Recibido en</text>
<text x="1233" y="414" textLength="45" lengthAdjust="spacingAndGlyphs">Recibido en</text>
<text x="1233" y="479" textLength="45" lengthAdjust="spacingAndGlyphs">Recibido en</text>
<text x="1238" y="543" textLength="37" lengthAdjust="spacingAndGlyphs">Enviado a</text>
<text x="1240" y="608" textLength="37" lengthAdjust="spacingAndGlyphs">Enviado a</text>
</g>
<g font-size="10" fill="#3d4450" stroke="#3d4450" stroke-width=".2">
<text x="1200" y="296" textLength="76" lengthAdjust="spacingAndGlyphs">3BEknf...oJgefBT</text>
<text x="1200" y="361" textLength="76" lengthAdjust="spacingAndGlyphs">3BEknf...oJgefBT</text>
<text x="1200" y="426" textLength="76" lengthAdjust="spacingAndGlyphs">3BEknf...oJgefBT</text>
<text x="1200" y="491" textLength="76" lengthAdjust="spacingAndGlyphs">3BEknf...oJgefBT</text>
<text x="1196" y="554" textLength="80" lengthAdjust="spacingAndGlyphs">0xcbF9...036aCe1</text>
<text x="1197" y="619" textLength="80" lengthAdjust="spacingAndGlyphs">0xcbF9...036aCe1</text>
</g>

<!-- status pills -->
<rect x="1021" y="307" width="102" height="16" rx="8" fill="#eeeff0"/>
<text x="1026" y="318.500" font-size="9" textLength="89" lengthAdjust="spacingAndGlyphs" fill="#878c95"><tspan class="b" fill="#666b74">1</tspan> de <tspan class="b" fill="#666b74">3</tspan> confirmaciones</text>
<rect x="1021" y="373" width="64" height="15.500" rx="7.700" fill="#eef7e3"/>
<text x="1026.500" y="384" font-size="9" textLength="50" lengthAdjust="spacingAndGlyphs" fill="#6ea33a">Completado</text>
<rect x="1021" y="437" width="103" height="16.500" rx="8.200" fill="#eeeff0"/>
<text x="1026" y="448.500" font-size="9" textLength="90" lengthAdjust="spacingAndGlyphs" fill="#878c95"><tspan class="b" fill="#666b74">0</tspan> de <tspan class="b" fill="#666b74">3</tspan> confirmaciones</text>
<rect x="1021" y="502" width="64" height="16" rx="8" fill="#eef7e3"/>
<text x="1026.500" y="513.500" font-size="9" textLength="50" lengthAdjust="spacingAndGlyphs" fill="#6ea33a">Completado</text>
<rect x="1021" y="566" width="151" height="16" rx="8" fill="#fff5d9"/>
<text x="1026" y="577.500" font-size="9" textLength="139" lengthAdjust="spacingAndGlyphs" fill="#e8b02e">Esperando confirmación del Email</text>
<rect x="1021" y="631" width="44" height="16" rx="8" fill="#eef7e3"/>
<text x="1027" y="642.500" font-size="9" textLength="32" lengthAdjust="spacingAndGlyphs" fill="#6ea33a">Enviado</text>

<!-- blockchain links -->
<use href="#ex" x="1217" y="312"/><use href="#ex" x="1217" y="377"/><use href="#ex" x="1217" y="442"/><use href="#ex" x="1217" y="507"/>
<g font-size="7" fill="#7ab4d4">
<text x="1230" y="317" textLength="48" lengthAdjust="spacingAndGlyphs">Blockchain info</text>
<text x="1230" y="382" textLength="48" lengthAdjust="spacingAndGlyphs">Blockchain info</text>
<text x="1230" y="447" textLength="48" lengthAdjust="spacingAndGlyphs">Blockchain info</text>
<text x="1230" y="512" textLength="48" lengthAdjust="spacingAndGlyphs">Blockchain info</text>
<text x="1188" y="641" textLength="77" lengthAdjust="spacingAndGlyphs">ID de transacción (Hash)</text>
</g>
<rect x="1270" y="634" width="7" height="8.500" rx=".8" fill="none" stroke="#5ba3c9"/><rect x="1271.500" y="632.500" width="4" height="2.500" fill="#5ba3c9"/>
</svg>
</body></html>
